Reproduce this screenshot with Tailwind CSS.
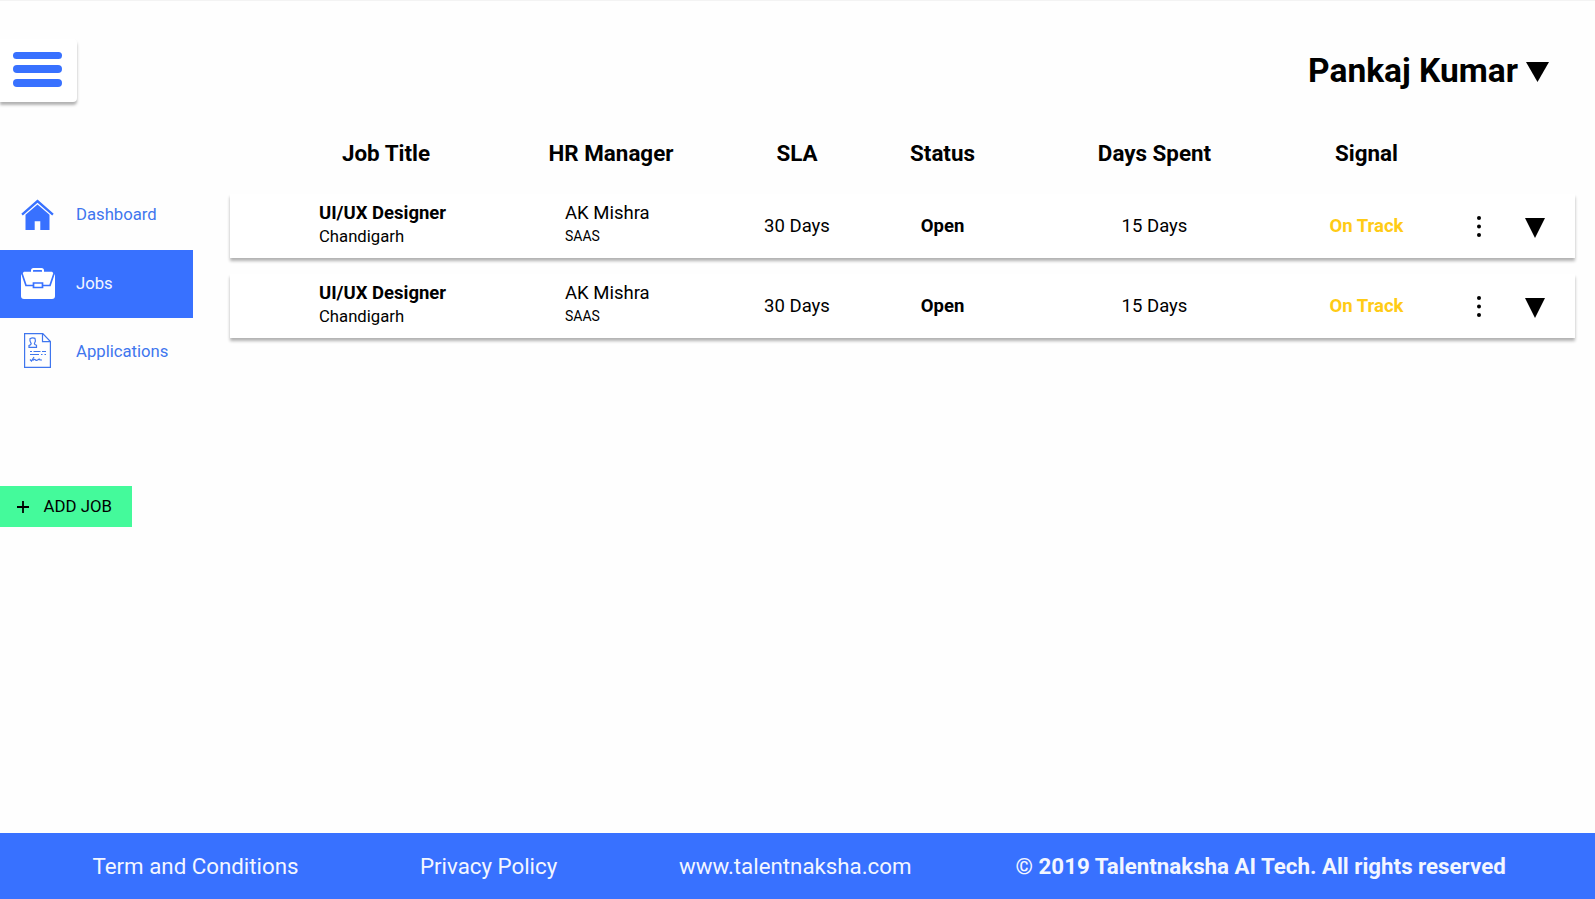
<!DOCTYPE html>
<html lang="en">
<head>
  <meta charset="UTF-8">
  <meta name="viewport" content="width=device-width, initial-scale=1.0">
  <title>Talentnaksha - Jobs</title>
  <script src="https://cdn.jsdelivr.net/npm/@tailwindcss/browser@4"></script>
</head>
<body class="flex h-screen flex-col overflow-hidden border-t border-[#f3f3f3] bg-[#fefefe] font-[Roboto,sans-serif] text-black">
  <!-- Header -->
  <header class="flex h-[119px] shrink-0 items-start justify-between pt-[38px] pr-[46px]">
    <button class="flex h-[63px] w-[77px] flex-col gap-[6px] rounded-r-[4px] bg-white pt-[12.500px] pl-[13px] shadow-[0_3px_3px_rgba(0,0,0,0.3)]" aria-label="Menu">
      <span class="h-[7.700px] w-[49px] rounded-full bg-[#3871ff]"></span>
      <span class="h-[7.700px] w-[49px] rounded-full bg-[#3871ff]"></span>
      <span class="h-[7.700px] w-[49px] rounded-full bg-[#3871ff]"></span>
    </button>
    <button class="flex items-center gap-[8px] pt-[12px] text-[33.500px] leading-[40px] font-bold">
      <span>Pankaj Kumar</span>
      <svg class="mt-[2px] h-[20px] w-[23px]" viewBox="0 0 23 20"><path d="M0 0h23L11.5 20z"/></svg>
    </button>
  </header>

  <div class="flex flex-1">
    <!-- Sidebar -->
    <aside class="w-[230px] shrink-0 pt-[60px]">
      <nav class="w-[193px] text-[16.700px] text-[#3f76ee]">
        <a class="flex h-[70px] items-center pl-[21px]">
          <svg class="h-[32px] w-[33px]" viewBox="0 0 33 32" fill="#3871ff">
            <path d="M16.500.500L.3 14.800l1.500 1.700L16.500 3.800l14.700 12.700 1.500-1.700z"/>
            <path d="M16.500 5.500L4.500 15.700v15.300h9.200v-8.800h5.600v8.800h9.200V15.700z"/>
          </svg>
          <span class="ml-[22px]">Dashboard</span>
        </a>
        <a class="flex h-[68px] items-center bg-[#3871ff] pl-[21px] text-[#f3f6ff]">
          <svg class="mb-[2px] h-[31px] w-[34px]" viewBox="0 0 34 31">
            <path d="M11 4V2.500Q11 1 12.500 1h8Q22 1 22 2.500V4" fill="none" stroke="#fff" stroke-width="2"/>
            <path d="M3 3.800h28l3 3V28q0 3-3 3H3q-3 0-3-3V6.800z" fill="#fff"/>
            <path d="M.8 5L5 17.500h7.500M33.200 5L29 17.500h-7.500M12.500 15h9v4.500h-9z" fill="none" stroke="#3871ff" stroke-width="1.700"/>
          </svg>
          <span class="mb-[1px] ml-[21px]">Jobs</span>
        </a>
        <a class="flex h-[67px] items-center pl-[24px]">
          <svg class="mb-[2px] h-[35px] w-[27px]" viewBox="0 0 27 35" fill="none" stroke="#3f76ee" stroke-width="1.200">
            <path d="M.6.6h18.200l7.600 8v25.800H.6zM18.500.6v8h7.900"/>
            <path d="M6 5.700q2.500-1.500 5-.3 1.200 2.800-.6 5.200.1 1.100 2.100 1.700v2H5v-1.800q2-.6 2.200-1.900-1.800-2.400-1.200-4.900z"/>
            <path d="M6 18.500h2M9.500 18.500h7M18 18.500h4M6 21.500h9M17 21.500h1.500M20.500 21.500h1.500"/>
            <path d="M6 26.500l1.500 1.500 2.500-4M9 27.500q1.500-2 2.500-.7t2.500 0 2 .2h2"/>
          </svg>
          <span class="ml-[25px]">Applications</span>
        </a>
      </nav>
      <button class="mt-[101px] flex h-[41px] w-[132px] items-center bg-[#44fa9b] pl-[17px] text-[16.800px]">
        <svg class="h-[12px] w-[12px]" viewBox="0 0 12 12" fill="none" stroke="#000" stroke-width="1.800"><path d="M6 0v12M0 6h12"/></svg>
        <span class="ml-[14.500px]">ADD JOB</span>
      </button>
    </aside>

    <!-- Job list -->
    <main class="w-[1345px] text-[18.500px]">
      <div class="grid h-[74px] grid-cols-[224px_226px_146px_145px_279px_145px_81px_31px] pt-[17px] pl-[44px] text-center text-[22.400px] leading-[33px] font-bold">
        <div>Job Title</div>
        <div>HR Manager</div>
        <div>SLA</div>
        <div>Status</div>
        <div>Days Spent</div>
        <div>Signal</div>
      </div>

      <div class="space-y-[16px]">
        <div class="grid h-[64px] grid-cols-[224px_226px_146px_145px_279px_145px_80px_31px] items-center bg-white pl-[44px] text-center shadow-[0_3px_3px_rgba(0,0,0,0.3)]">
          <div class="pb-[4px] pl-[45px] text-left">
            <div class="leading-[24px] font-bold">UI/UX Designer</div>
            <div class="text-[16.700px] leading-[23px]">Chandigarh</div>
          </div>
          <div class="pb-[4px] pl-[67px] text-left">
            <div class="leading-[24px]">AK Mishra</div>
            <div class="text-[14px] leading-[23px]">SAAS</div>
          </div>
          <div class="pt-[1px]">30 Days</div>
          <div class="pt-[1px] font-bold">Open</div>
          <div class="pt-[1px]">15 Days</div>
          <div class="pt-[1px] font-bold text-[#ffcb16]">On Track</div>
          <svg class="mx-auto mt-[1px] h-[22px] w-[4px]" viewBox="0 0 4 22"><circle cx="2" cy="2" r="2"/><circle cx="2" cy="10.500" r="2"/><circle cx="2" cy="19" r="2"/></svg>
          <svg class="mx-auto mt-[3px] h-[20px] w-[20px]" viewBox="0 0 20 20"><path d="M0 0h20L10 20z"/></svg>
        </div>

        <div class="grid h-[64px] grid-cols-[224px_226px_146px_145px_279px_145px_80px_31px] items-center bg-white pl-[44px] text-center shadow-[0_3px_3px_rgba(0,0,0,0.3)]">
          <div class="pb-[4px] pl-[45px] text-left">
            <div class="leading-[24px] font-bold">UI/UX Designer</div>
            <div class="text-[16.700px] leading-[23px]">Chandigarh</div>
          </div>
          <div class="pb-[4px] pl-[67px] text-left">
            <div class="leading-[24px]">AK Mishra</div>
            <div class="text-[14px] leading-[23px]">SAAS</div>
          </div>
          <div class="pt-[1px]">30 Days</div>
          <div class="pt-[1px] font-bold">Open</div>
          <div class="pt-[1px]">15 Days</div>
          <div class="pt-[1px] font-bold text-[#ffcb16]">On Track</div>
          <svg class="mx-auto mt-[1px] h-[22px] w-[4px]" viewBox="0 0 4 22"><circle cx="2" cy="2" r="2"/><circle cx="2" cy="10.500" r="2"/><circle cx="2" cy="19" r="2"/></svg>
          <svg class="mx-auto mt-[3px] h-[20px] w-[20px]" viewBox="0 0 20 20"><path d="M0 0h20L10 20z"/></svg>
        </div>
      </div>
    </main>
  </div>

  <!-- Footer -->
  <footer class="flex h-[66px] shrink-0 items-center bg-[#3871ff] pt-[2px] pl-[92.500px] text-[22.300px] text-[#f3f6ff]">
    <a class="w-[327.500px]">Term and Conditions</a>
    <a class="w-[259px]">Privacy Policy</a>
    <a class="w-[336.500px]">www.talentnaksha.com</a>
    <span class="font-bold">© 2019 Talentnaksha AI Tech. All rights reserved</span>
  </footer>
</body>
</html>
